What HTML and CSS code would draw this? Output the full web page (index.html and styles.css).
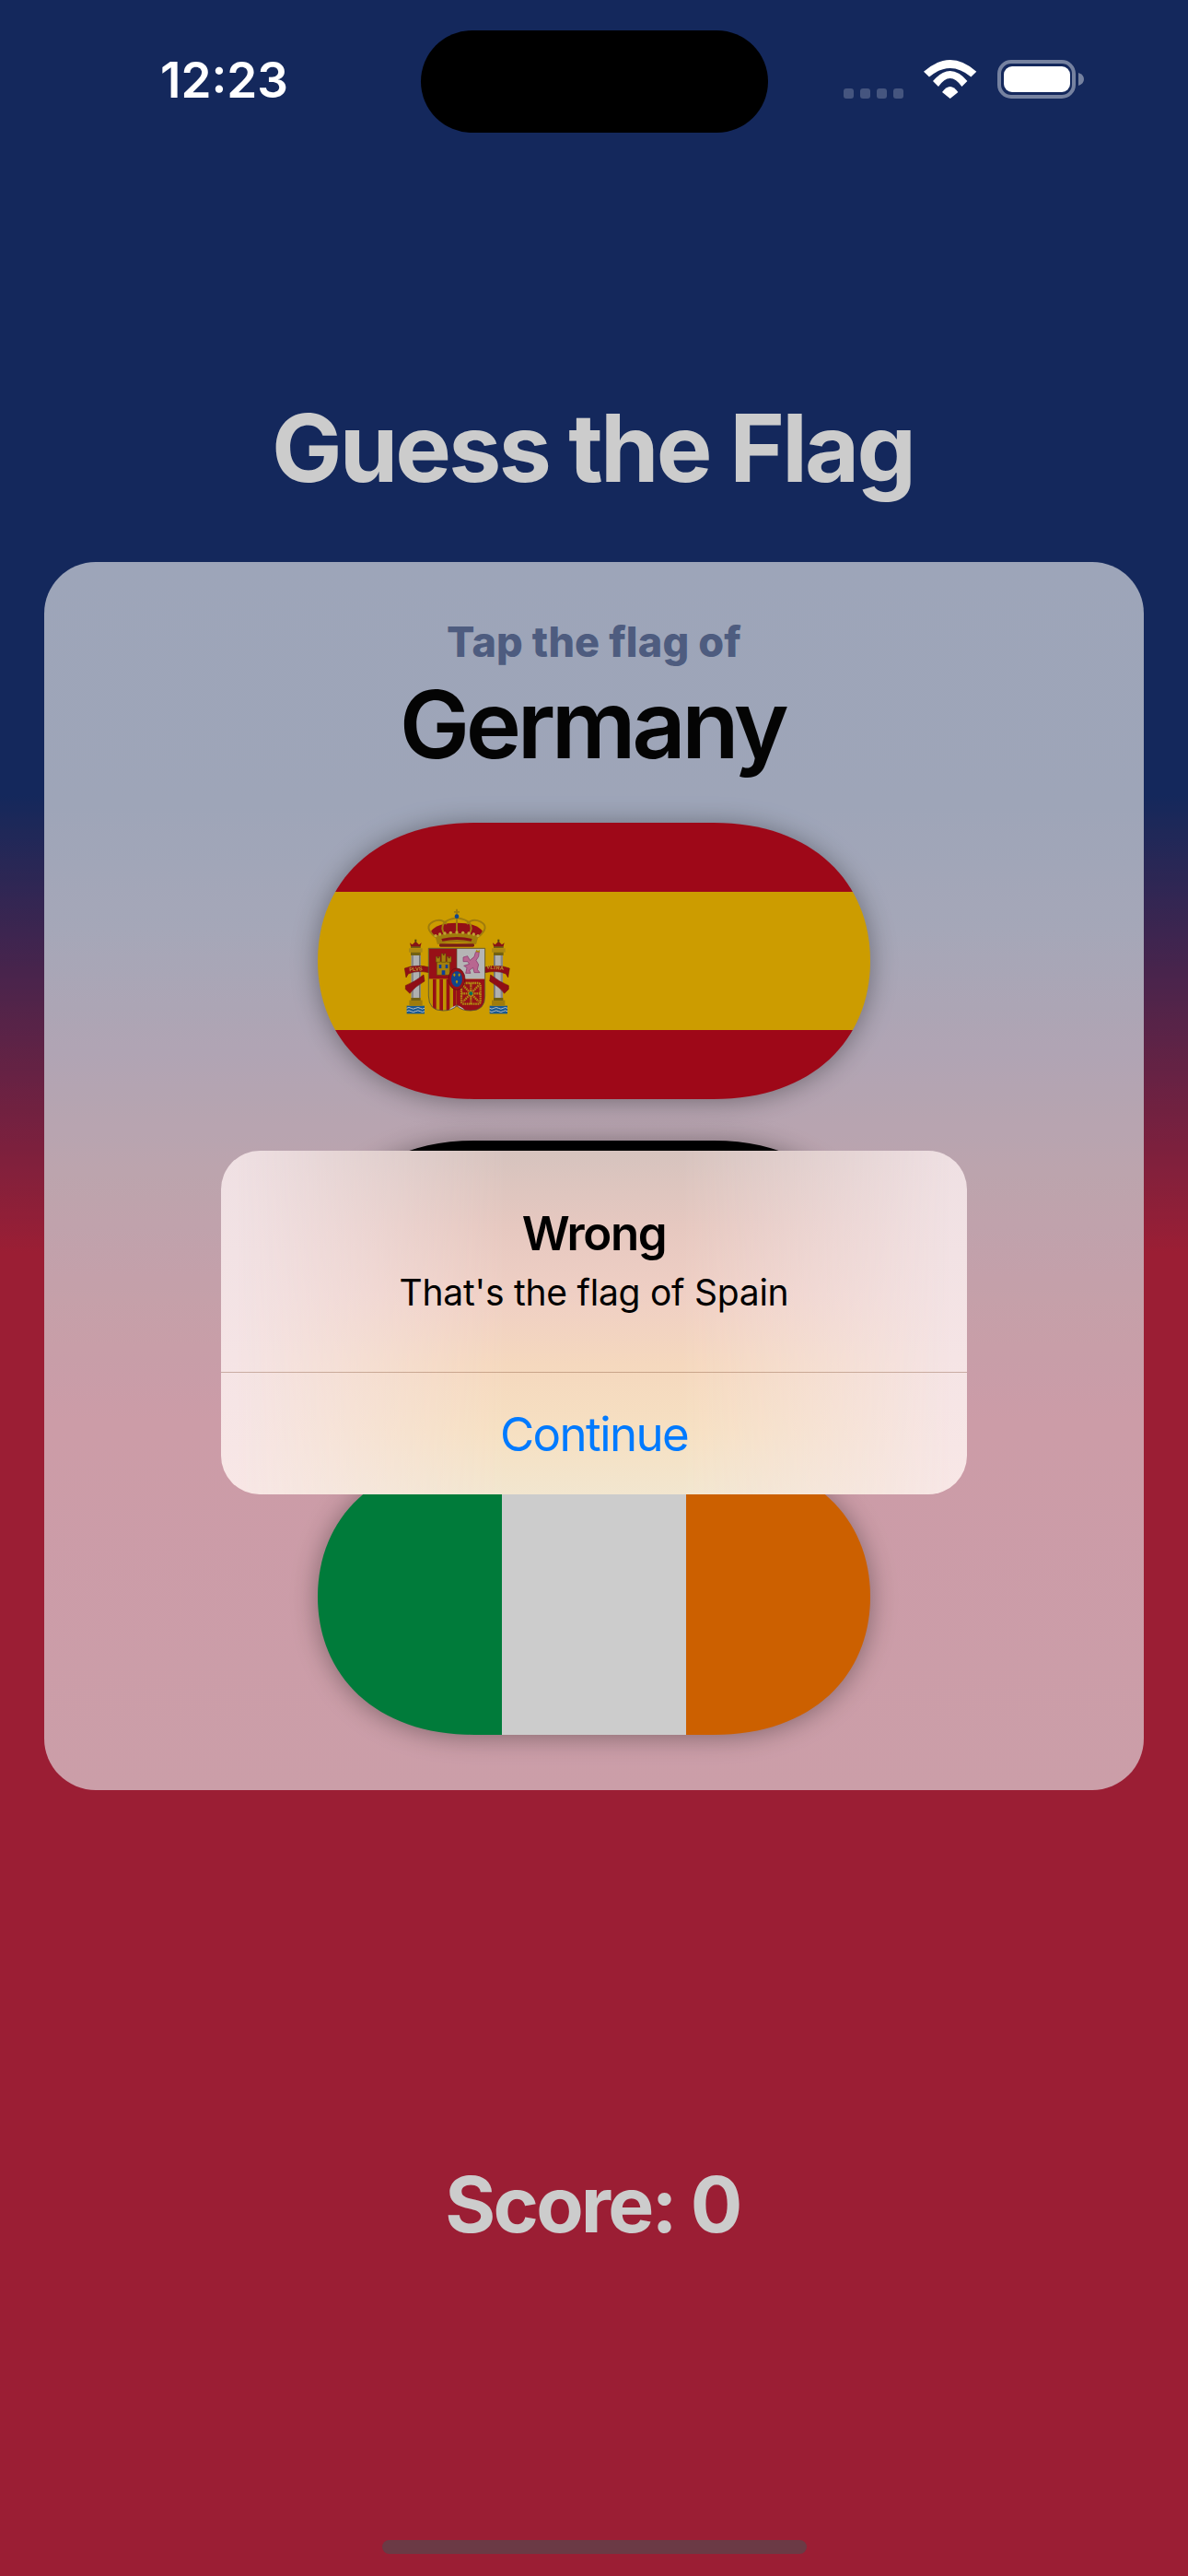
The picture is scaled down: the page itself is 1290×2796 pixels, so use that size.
FILE: index.html
```html
<!DOCTYPE html>
<html lang="en">
<head>
<meta charset="utf-8">
<title>Guess the Flag</title>
<link rel="stylesheet" href="styles.css">
</head>
<body>
<div class="page">
  <h1 class="title">Guess the Flag</h1>
  <section class="card">
    <p class="prompt">Tap the flag of</p>
    <p class="country">Germany</p>
    <div class="flags">
      <div class="flag-shadow">
        <div class="flag flag-rows flag-spain">
          <div class="stripe es-red"></div>
          <div class="stripe es-gold">
            <svg class="coat" viewBox="0 0 480 435" width="160" height="145" xmlns="http://www.w3.org/2000/svg" aria-hidden="true">
              <defs>
                <clipPath id="shield"><path d="M163 175H347V330Q347 378 300 378Q270 378 255 362Q240 378 210 378Q163 378 163 330Z"/></clipPath>
                <g id="pillar">
                  <rect x="92" y="362" width="58" height="26" fill="#1f6fb5"/>
                  <path d="M92 370q7-5 14 0t15 0 15 0 14 0M92 380q7-5 14 0t15 0 15 0 14 0" fill="none" stroke="#e8eef5" stroke-width="3"/>
                  <rect x="100" y="344" width="43" height="18" fill="#c99b10"/>
                  <rect x="106" y="336" width="31" height="9" fill="#8f7a18"/>
                  <rect x="107" y="198" width="30" height="138" fill="#dcdcdc"/>
                  <rect x="107" y="198" width="7" height="138" fill="#a9a9a9"/>
                  <rect x="132" y="198" width="5" height="138" fill="#8e8e8e"/>
                  <rect x="99" y="175" width="44" height="13" fill="#d6aa18"/>
                  <rect x="105" y="188" width="32" height="10" fill="#8f7a18"/>
                  <path d="M102 157L110 163L121 152L132 163L140 157L136 172H106Z" fill="#a81a1c"/>
                  <rect x="118" y="146" width="6" height="9" fill="#6d5a10"/>
                  <rect x="105" y="169" width="32" height="5" fill="#8f7a18"/>
                  <path d="M85 240Q120 226 165 236V254Q125 246 97 258L90 270Z" fill="#b5121b" stroke="#7d0d13" stroke-width="1.5"/>
                  <path d="M88 296Q115 286 147 261L150 282Q118 300 102 322L88 308Z" fill="#b5121b" stroke="#7d0d13" stroke-width="1.5"/>
                </g>
              </defs>
              <use href="#pillar"/>
              <use href="#pillar" transform="translate(512 0) scale(-1 1)"/>
              <text class="motto" x="100" y="248" transform="rotate(-4 122 244)">PLVS</text>
              <text class="motto" x="352" y="244" transform="rotate(5 385 244)">VLTRA</text>
              <g clip-path="url(#shield)">
                <rect x="163" y="175" width="92" height="100" fill="#bd141d"/>
                <rect x="255" y="175" width="92" height="100" fill="#e3e3e3"/>
                <rect x="163" y="275" width="92" height="108" fill="#eeb900"/>
                <path d="M177 275h11v108h-11zM199 275h11v108h-11zM221 275h11v108h-11zM243 275h11v108h-11z" fill="#bd141d"/>
                <rect x="255" y="275" width="92" height="108" fill="#bd141d"/>
                <g fill="none" stroke="#dcae17" stroke-width="7" stroke-dasharray="5 2">
                  <rect x="270" y="288" width="62" height="68" rx="8"/>
                  <path d="M301 288V356M270 322H332M276 296L326 348M326 296L276 348"/>
                </g>
                <circle cx="301" cy="322" r="6" fill="#0b8a73"/>
                <path d="M222 385Q255 338 288 385Z" fill="#ececec"/>
                <path d="M255 358V382M243 378H267" stroke="#3b7a3f" stroke-width="3" fill="none"/>
                <circle cx="255" cy="366" r="4" fill="#c22a34"/>
              </g>
              <path d="M163 175H347V330Q347 378 300 378Q270 378 255 362Q240 378 210 378Q163 378 163 330Z" fill="none" stroke="#6e6a45" stroke-width="2.5"/>
              <path d="M255 175V275" stroke="#6e6a45" stroke-width="2"/>
              <g fill="#cf9f10" stroke="#6d5a10" stroke-width="1.5">
                <path d="M190 218H232V262H190Z"/>
                <path d="M187 202h5v5h4v-5h5v18h-14zM205 192h5v5h4v-5h5v28h-14zM223 202h5v5h4v-5h5v18h-14z"/>
              </g>
              <path d="M197 228h8v12h-8zM218 228h8v12h-8zM206 247h11v14h-11z" fill="#0f4fc0"/>
              <path d="M276 204L290 200L298 214L312 202L316 188L328 186L326 202L318 214L326 228L322 244L330 254H312L308 238L296 246L300 256H284L288 238L278 232L296 226L290 218L276 218Z" fill="#e681b4" stroke="#a63a80" stroke-width="2"/>
              <path d="M316 186l4-7 4 5 5-5 1 9z" fill="#d6aa18"/>
              <ellipse cx="255" cy="275" rx="27" ry="35" fill="#bd141d" stroke="#6d1217" stroke-width="2"/>
              <ellipse cx="255" cy="275" rx="18" ry="26" fill="#1558b0"/>
              <g fill="#e6b400">
                <path d="M247 256l4 5-4 7-4-7zM263 256l4 5-4 7-4-7zM255 278l4 5-4 8-4-8z"/>
              </g>
              <path d="M172 118Q190 92 255 92Q320 92 338 118Q340 130 322 142H188Q170 130 172 118Z" fill="#b8141d"/>
              <g fill="none" stroke="#c99b10" stroke-width="6">
                <path d="M185 138Q145 105 178 88Q205 76 222 96"/>
                <path d="M215 130Q190 85 255 76Q320 85 295 130"/>
                <path d="M325 138Q365 105 332 88Q305 76 288 96"/>
                <path d="M255 76V132"/>
              </g>
              <path d="M184 134Q255 116 326 134L318 162Q255 150 192 162Z" fill="#c99b10"/>
              <path d="M205 144Q255 132 305 144L302 152Q255 142 208 152Z" fill="#a81a1c"/>
              <g fill="#f0cc40">
                <circle cx="186" cy="134" r="5"/><circle cx="200" cy="129" r="5"/><circle cx="216" cy="126" r="5"/><circle cx="235" cy="124" r="5"/><circle cx="255" cy="123" r="5"/><circle cx="275" cy="124" r="5"/><circle cx="294" cy="126" r="5"/><circle cx="310" cy="129" r="5"/><circle cx="324" cy="134" r="5"/>
              </g>
              <rect x="198" y="160" width="114" height="10" rx="4" fill="#96261c"/>
              <path d="M252 47h6v7h6v5h-6v7h-6v-7h-6v-5h6z" fill="#c99b10"/>
              <circle cx="255" cy="71" r="7" fill="#1558b0"/>
            </svg>
          </div>
          <div class="stripe es-red"></div>
        </div>
      </div>
      <div class="flag-shadow">
        <div class="flag flag-rows">
          <div class="third de-black"></div>
          <div class="third de-red"></div>
          <div class="third de-gold"></div>
        </div>
      </div>
      <div class="flag-shadow">
        <div class="flag flag-cols">
          <div class="third ie-green"></div>
          <div class="third ie-white"></div>
          <div class="third ie-orange"></div>
        </div>
      </div>
    </div>
  </section>
  <p class="score">Score: 0</p>

  <div class="dim"></div>

  <div class="status">
    <span class="time">12:23</span>
    <div class="status-icons">
      <div class="signal"><i></i><i></i><i></i><i></i></div>
      <svg class="wifi" viewBox="0 0 58 42" width="58" height="42" xmlns="http://www.w3.org/2000/svg" aria-hidden="true">
        <path d="M0 12.7Q28.7-12.7 57.3 12.7L51.4 18.5Q28.7-.5 6 18.5Z"/>
        <path d="M10 23Q28.7 1 47.4 23L41.4 29Q28.7 11 16 29Z"/>
        <path d="M20 35Q28.7 23 37.4 35L28.7 42Z"/>
      </svg>
      <svg class="battery" viewBox="0 0 95 42" width="95" height="42" xmlns="http://www.w3.org/2000/svg" aria-hidden="true">
        <rect class="battery-ring" x="2" y="2" width="81" height="38" rx="13"/>
        <rect class="battery-fill" x="7" y="7" width="72" height="28" rx="9"/>
        <path class="battery-cap" d="M88 14Q94 16 94 21Q94 26 88 28Z"/>
      </svg>
    </div>
  </div>
  <div class="island"></div>

  <div class="alert">
    <div class="alert-body">
      <p class="alert-title">Wrong</p>
      <p class="alert-message">That's the flag of Spain</p>
    </div>
    <div class="alert-action">Continue</div>
  </div>

  <div class="home"></div>
</div>
</body>
</html>
```

FILE: styles.css
```css
* { box-sizing: border-box; }
html, body { margin: 0; padding: 0; }
body { font-family: Inter, "Liberation Sans", sans-serif; }
p, h1 { margin: 0; }

.page {
  position: relative;
  width: 1290px;
  height: 2796px;
  overflow: hidden;
  display: flex;
  flex-direction: column;
  align-items: center;
  padding-top: 425px;
  background: linear-gradient(180deg, #193373 30.8%, #c22642 48.6%);
}

.title {
  font-size: 102px;
  line-height: 122px;
  font-weight: 700;
  letter-spacing: -2.8px;
  color: #fff;
  margin-right: 3px;
  margin-bottom: 63px;
}

.card {
  width: 1194px;
  height: 1333px;
  padding-top: 60px;
  border-radius: 56px;
  display: flex;
  flex-direction: column;
  align-items: center;
  background: linear-gradient(180deg, #c5cfe8 0%, #c6cfe7 20%, #cfd1e6 30%, #ddcee1 40%, #eccdd9 50%, #f7c8d4 60%, #ffc3d1 70%, #fec6d3 100%);
}
.prompt {
  font-size: 45px;
  line-height: 54px;
  font-weight: 800;
  letter-spacing: .15px;
  color: #62749f;
  margin-bottom: 1px;
}
.country {
  font-size: 102px;
  line-height: 122px;
  font-weight: 600;
  letter-spacing: -4.4px;
  color: #060606;
  margin-right: 4px;
  margin-bottom: 46px;
}
.flags { display: flex; flex-direction: column; gap: 45px; }
.flag-shadow { filter: drop-shadow(0 2px 14px rgba(0, 0, 0, .36)); }
.flag {
  width: 600px;
  height: 300px;
  display: flex;
  clip-path: path("M170 0H430C538 0 600 65 600 150C600 235 538 300 430 300H170C62 300 0 235 0 150C0 65 62 0 170 0Z");
}
.flag-rows { flex-direction: column; }
.third { flex: 1; }
.stripe { height: 75px; }
.es-red { background: #c60b1e; }
.es-gold {
  height: 150px;
  background: #ffc400;
  display: flex;
  align-items: center;
  padding-left: 66px;
}
.coat { display: block; flex: none; }
.motto { font-family: "Liberation Sans", sans-serif; font-size: 17px; font-weight: 700; fill: #e8c040; }
.de-black { background: #000; }
.de-red { background: #d00; }
.de-gold { background: #ffce00; }
.ie-green { background: #009a49; }
.ie-white { background: #fff; }
.ie-orange { background: #ff7900; }

.score {
  margin-top: 400px;
  margin-right: 3px;
  font-size: 84px;
  line-height: 100px;
  font-weight: 700;
  letter-spacing: -2.8px;
  color: #fff;
}

.dim {
  position: absolute;
  inset: 0;
  background: rgba(0, 0, 0, .2);
}

.status {
  position: absolute;
  top: 65px;
  left: 0;
  right: 0;
  padding: 0 112px 0 174px;
  display: flex;
  justify-content: space-between;
  align-items: flex-start;
}
.time {
  font-size: 53px;
  line-height: 45px;
  font-weight: 600;
  color: #fff;
}
.status-icons { display: flex; align-items: flex-end; gap: 22px; }
.signal { display: flex; gap: 7px; margin-bottom: 0; }
.signal i { display: block; width: 11px; height: 11px; border-radius: 3px; background: #45557f; }
.wifi { display: block; fill: #fff; }
.battery { display: block; }
.battery-ring { fill: none; stroke: #fff; stroke-opacity: .42; stroke-width: 4; }
.battery-fill { fill: #fff; }
.battery-cap { fill: #fff; fill-opacity: .42; }

.island {
  position: absolute;
  left: 457px;
  top: 33px;
  width: 377px;
  height: 111px;
  border-radius: 56px;
  background: #000;
}

.alert {
  position: absolute;
  left: 240px;
  top: 1249px;
  width: 810px;
  height: 373px;
  border-radius: 42px;
  overflow: hidden;
  display: flex;
  flex-direction: column;
  text-align: center;
  color: #000;
  background: linear-gradient(180deg, #efe0e3, #f5e4e5 60%, #f8e7e6);
}
.alert::before {
  content: "";
  position: absolute;
  inset: 0;
  background: linear-gradient(180deg, #d6c3be 0%, #e6c8c0 22%, #efcfc4 42%, #f5d8be 62%, #f6e0c2 82%, #f2e6cf 100%);
  -webkit-mask-image: linear-gradient(90deg, transparent 2%, #000 38%, #000 62%, transparent 98%);
  mask-image: linear-gradient(90deg, transparent 2%, #000 38%, #000 62%, transparent 98%);
}
.alert-body {
  position: relative;
  height: 241px;
  padding-top: 59px;
  border-bottom: 1px solid rgba(120, 70, 40, .35);
}
.alert-title { font-size: 51px; line-height: 61px; font-weight: 600; letter-spacing: -1.4px; margin-bottom: 10px; }
.alert-message { font-size: 39px; line-height: 47px; font-weight: 400; letter-spacing: -.25px; }
.alert-action {
  position: relative;
  flex: 1;
  display: flex;
  align-items: center;
  justify-content: center;
  font-size: 51px;
  line-height: 61px;
  letter-spacing: -1.6px;
  color: #007aff;
}

.home {
  position: absolute;
  left: 415px;
  top: 2757px;
  width: 461px;
  height: 15px;
  border-radius: 8px;
  background: #6b3a45;
}
```
